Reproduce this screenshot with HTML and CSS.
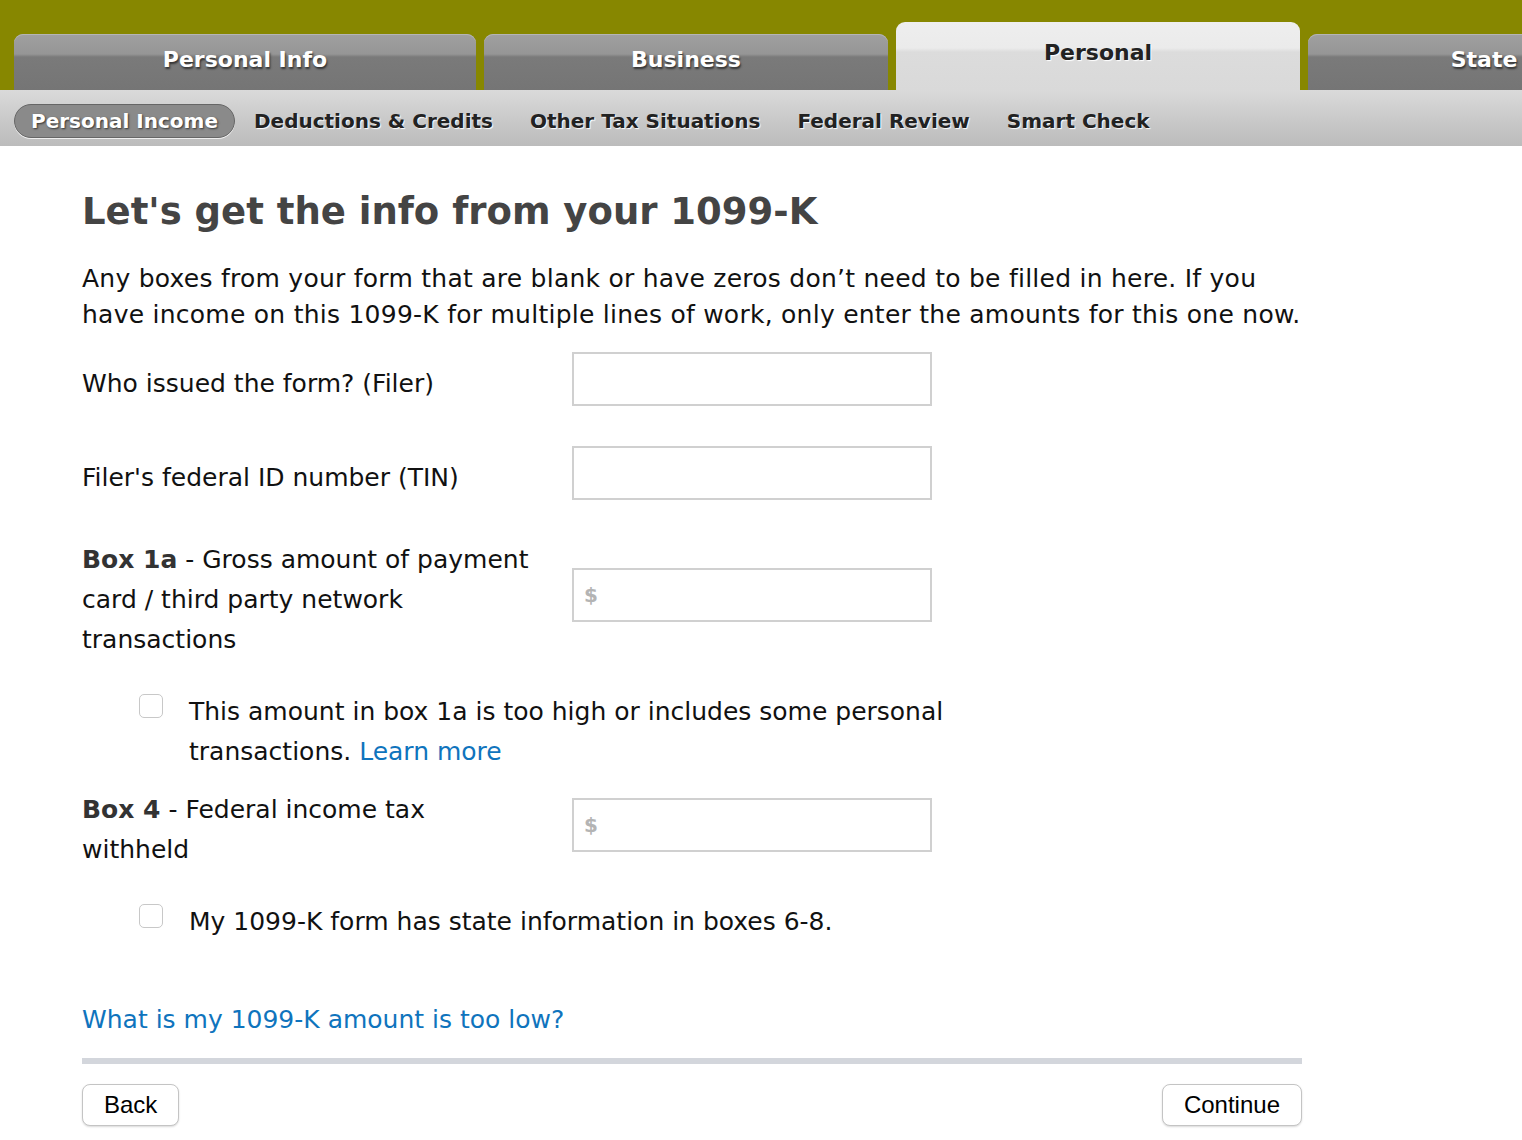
FILE: index.html
```html
<!DOCTYPE html>
<html lang="en">
<head>
<meta charset="utf-8">
<title>1099-K</title>
<link rel="stylesheet" href="styles.css">
</head>
<body>
<div class="tabbar">
  <div class="tab tab-info">Personal Info</div>
  <div class="tab tab-biz">Business</div>
  <div class="tab tab-active">Personal</div>
  <div class="tab tab-state">State</div>
</div>
<nav class="subnav">
  <span class="sub sub-active">Personal Income</span>
  <span class="sub">Deductions &amp; Credits</span>
  <span class="sub">Other Tax Situations</span>
  <span class="sub">Federal Review</span>
  <span class="sub">Smart Check</span>
</nav>
<main class="content">
  <h1 class="title">Let's get the info from your 1099-K</h1>
  <p class="intro">Any boxes from your form that are blank or have zeros don’t need to be filled in here. If you have income on this 1099-K for multiple lines of work, only enter the amounts for this one now.</p>

  <div class="row row1">
    <label class="lbl">Who issued the form? (Filer)</label>
    <div class="field"></div>
  </div>
  <div class="row row2">
    <label class="lbl">Filer's federal ID number (TIN)</label>
    <div class="field"></div>
  </div>
  <div class="row row3">
    <label class="lbl"><b>Box 1a</b> - Gross amount of payment card / third party network transactions</label>
    <div class="field"><span class="dollar">$</span></div>
  </div>
  <div class="check check1">
    <span class="box"></span>
    <span class="ctext">This amount in box 1a is too high or includes some personal transactions. <a class="link">Learn more</a></span>
  </div>
  <div class="row row4">
    <label class="lbl"><b>Box 4</b> - Federal income tax withheld</label>
    <div class="field"><span class="dollar">$</span></div>
  </div>
  <div class="check check2">
    <span class="box"></span>
    <span class="ctext">My 1099-K form has state information in boxes 6-8.</span>
  </div>
  <a class="link help">What is my 1099-K amount is too low?</a>
  <div class="divider"></div>
  <div class="buttons">
    <button class="btn">Back</button>
    <button class="btn">Continue</button>
  </div>
</main>
</body>
</html>
```

FILE: styles.css
```css
html, body {
  margin: 0;
  padding: 0;
  background: #fff;
  overflow: hidden;
}
body {
  font-family: "DejaVu Sans", Verdana, sans-serif;
  color: #111;
  width: 1522px;
  height: 1140px;
}
.tabbar {
  background: #878700;
  height: 90px;
  display: flex;
  align-items: flex-end;
  gap: 8px;
  padding-left: 14px;
  overflow: hidden;
  white-space: nowrap;
}
.tab {
  flex: none;
  height: 56px;
  border-radius: 9px 9px 0 0;
  background: linear-gradient(#a0a0a0 0, #969696 20px, #7a7a7a 23px, #757575 100%);
  color: #fff;
  font-weight: bold;
  font-size: 22px;
  text-align: center;
  line-height: 52px;
  text-shadow: 1px 2px 2px #333;
  box-shadow: inset 0 1px 0 #b5b5b5;
}
.tab-info { width: 462px; }
.tab-biz { width: 404px; }
.tab-state { width: 352px; }
.tab-active {
  width: 404px;
  height: 68px;
  line-height: 62px;
  color: #222;
  text-shadow: 1px 1px 1px #fff;
  background: linear-gradient(#eeeeee 0, #ebebeb 26px, #dcdcdc 30px, #d9d9d9 100%);
  box-shadow: none;
}
.subnav {
  height: 56px;
  box-sizing: border-box;
  padding-top: 5px;
  background: linear-gradient(#dadada, #c4c4c4 70%, #bcbcbc);
  display: flex;
  align-items: center;
  padding-left: 14px;
  gap: 1px;
}
.sub {
  font-weight: bold;
  font-size: 20px;
  color: #222;
  padding: 0 18px;
  line-height: 32px;
  text-shadow: 1px 1px 1px #fff;
}
.sub-active {
  background: #8a8a8a;
  border: 1px solid #666;
  border-radius: 18px;
  color: #fff;
  text-shadow: 1px 1px 2px #333;
  box-shadow: 0 1px 0 #eee;
  padding: 0 16px;
}
.content {
  margin-left: 82px;
  width: 1220px;
}
.title {
  margin: 0;
  padding-top: 40px;
  font-size: 37px;
  line-height: 52px;
  font-weight: bold;
  color: #444;
}
.intro {
  margin: 23px 0 0;
  font-size: 25px;
  line-height: 36px;
  letter-spacing: 0.25px;
}
.row {
  display: flex;
  align-items: center;
  font-size: 25px;
}
.lbl {
  width: 450px;
  margin-right: 40px;
  line-height: 40px;
  margin-top: 10px;
}
.lbl b { color: #333; }
.field {
  width: 346px;
  height: 50px;
  border: 2px solid #d0d0d0;
  display: flex;
  align-items: center;
  padding-left: 10px;
  box-sizing: content-box;
}
.dollar {
  color: #b4b4b4;
  font-size: 20px;
  font-weight: bold;
}
.row1 { margin-top: 19px; }
.row2 { margin-top: 40px; }
.row3 { margin-top: 30px; }
.row4 { margin-top: 8px; }
.check {
  display: flex;
  align-items: flex-start;
  font-size: 25px;
  line-height: 40px;
  padding-left: 57px;
}
.check1 { margin-top: 32px; }
.check2 { margin-top: 32px; }
.box {
  flex: none;
  width: 22px;
  height: 22px;
  border: 1px solid #c8c8c8;
  border-radius: 5px;
  margin-top: 2px;
  margin-right: 26px;
  background: #fff;
}
.ctext { width: 800px; }
.link {
  color: #0f74bd;
  cursor: pointer;
}
.help {
  display: block;
  margin-top: 58px;
  font-size: 25px;
  line-height: 40px;
}
.divider {
  margin-top: 18px;
  height: 6px;
  background: #d3d6dc;
}
.buttons {
  margin-top: 20px;
  display: flex;
  justify-content: space-between;
}
.btn {
  font-family: "Liberation Sans", Arial, sans-serif;
  font-size: 24px;
  height: 42px;
  padding: 0 21px;
  background: #fff;
  border: 1px solid #c4c4c4;
  border-radius: 8px;
  box-shadow: 0 1px 2px rgba(0,0,0,0.15);
  color: #000;
}
```
